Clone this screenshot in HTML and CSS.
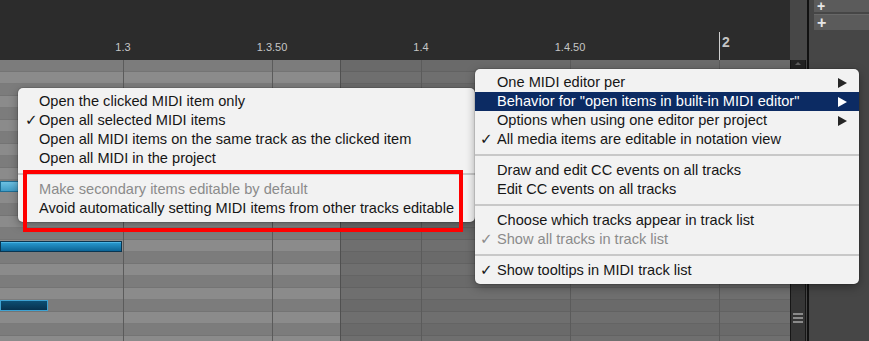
FILE: index.html
```html
<!DOCTYPE html>
<html>
<head>
<meta charset="utf-8">
<link rel="stylesheet" href="styles.css">
</head>
<body>
<div class="app">
  <div class="main">
    <div class="ruler">
      <span class="tick" style="left:123px">1.3</span>
      <span class="tick" style="left:272px">1.3.50</span>
      <span class="tick" style="left:421px">1.4</span>
      <span class="tick" style="left:570px">1.4.50</span>
      <span class="bar-line" style="left:719px"></span>
      <span class="bar-label" style="left:722px">2</span>
    </div>
    <div class="grid">
      <div class="zone zone-sel"></div>
      <div class="zone zone-rest"></div>
      <div class="vline" style="left:123px"></div>
      <div class="vline" style="left:272px"></div>
      <div class="vline vline-edge" style="left:340px"></div>
      <div class="vline" style="left:421px"></div>
      <div class="vline" style="left:570px"></div>
      <div class="vline" style="left:719px"></div>
      <div class="note note-sel" style="top:121px;width:110px"></div>
      <div class="note note-a" style="top:181px;width:122px"></div>
      <div class="note note-b" style="top:240px;width:48px"></div>
    </div>
  </div>
  <div class="scroll">
    <div class="scroll-head"></div>
    <div class="scroll-track">
      <div class="scroll-up"><span class="up-arrow"></span></div>
      <div class="scroll-fill"></div>
      <div class="grip"><i></i><i></i><i></i></div>
      <div class="scroll-foot"></div>
    </div>
  </div>
  <div class="panel">
    <div class="addbtn addbtn-first">+</div>
    <div class="addbtn">+</div>
  </div>
</div>

<div class="menu menu-left">
  <div class="item"><span class="mark"></span><span class="label">Open the clicked MIDI item only</span></div>
  <div class="item"><span class="mark">✓</span><span class="label">Open all selected MIDI items</span></div>
  <div class="item"><span class="mark"></span><span class="label">Open all MIDI items on the same track as the clicked item</span></div>
  <div class="item"><span class="mark"></span><span class="label">Open all MIDI in the project</span></div>
  <div class="sep"></div>
  <div class="item disabled"><span class="mark"></span><span class="label">Make secondary items editable by default</span></div>
  <div class="item"><span class="mark"></span><span class="label">Avoid automatically setting MIDI items from other tracks editable</span></div>
</div>

<div class="menu menu-right">
  <div class="item"><span class="mark"></span><span class="label">One MIDI editor per</span><span class="sub"></span></div>
  <div class="item hl"><span class="mark"></span><span class="label">Behavior for "open items in built-in MIDI editor"</span><span class="sub"></span></div>
  <div class="item"><span class="mark"></span><span class="label">Options when using one editor per project</span><span class="sub"></span></div>
  <div class="item"><span class="mark">✓</span><span class="label">All media items are editable in notation view</span></div>
  <div class="sep"></div>
  <div class="item"><span class="mark"></span><span class="label">Draw and edit CC events on all tracks</span></div>
  <div class="item"><span class="mark"></span><span class="label">Edit CC events on all tracks</span></div>
  <div class="sep"></div>
  <div class="item"><span class="mark"></span><span class="label">Choose which tracks appear in track list</span></div>
  <div class="item disabled"><span class="mark">✓</span><span class="label">Show all tracks in track list</span></div>
  <div class="sep"></div>
  <div class="item"><span class="mark">✓</span><span class="label">Show tooltips in MIDI track list</span></div>
</div>

<div class="callout"></div>
</body>
</html>
```

FILE: styles.css
```css
* { box-sizing: border-box; }
html, body {
  margin: 0;
  padding: 0;
  width: 869px;
  height: 341px;
  overflow: hidden;
  background: #2c2c2c;
}
body { position: relative; font-family: "Liberation Sans", Arial, sans-serif; }

.app {
  display: flex;
  width: 869px;
  height: 341px;
}

.main {
  width: 790px;
  display: flex;
  flex-direction: column;
}

.ruler {
  position: relative;
  height: 60px;
  background: #2c2c2c;
}
.tick {
  position: absolute;
  top: 40px;
  transform: translateX(-50%);
  font-size: 11px;
  line-height: 14px;
  color: #c6c6c6;
  white-space: nowrap;
}
.bar-line {
  position: absolute;
  top: 32px;
  bottom: 0;
  width: 1px;
  background: #cfcfcf;
}
.bar-label {
  position: absolute;
  top: 34px;
  font-size: 14px;
  line-height: 16px;
  font-weight: bold;
  color: #c4c4c4;
}

.grid {
  position: relative;
  flex: 1;
  display: flex;
  overflow: hidden;
}
.zone { height: 100%; }
.zone-sel {
  width: 340px;
  background:
    repeating-linear-gradient(to bottom,
      #7c7c7c 0, #7c7c7c 11px, #747474 11px, #747474 12px,
      #8b8b8b 12px, #8b8b8b 23px, #7b7b7b 23px, #7b7b7b 24px);
}
.zone-rest {
  flex: 1;
  background:
    repeating-linear-gradient(to bottom,
      #6a6a6a 0, #6a6a6a 11px, #626262 11px, #626262 12px,
      #6f6f6f 12px, #6f6f6f 23px, #646464 23px, #646464 24px);
}
.vline {
  position: absolute;
  top: 0;
  bottom: 0;
  width: 1px;
  background: #5b5b5b;
}
.vline-edge { background: #505050; }

.note {
  position: absolute;
  left: 0;
  height: 11px;
}
.note-sel {
  background: linear-gradient(#6cc0e2, #3f9cc6);
  border: 1px solid #1e6e95;
}
.note-a {
  background: linear-gradient(#2a9cd2, #0b6496);
  border: 1px solid #0b3550;
  box-shadow: inset 0 1px 0 #49b4e4;
}
.note-b {
  background: linear-gradient(#0d4e72, #07324f);
  border: 1px solid #3ea2d2;
}

.scroll {
  width: 19px;
  display: flex;
  flex-direction: column;
  background: #474747;
  border-right: 2px solid #111;
}
.scroll-head { height: 60px; }
.scroll-track {
  flex: 1;
  width: 16px;
  display: flex;
  flex-direction: column;
  align-items: center;
  background: #363636;
  border-left: 1px solid #161616;
  border-right: 1px solid #161616;
}
.scroll-up {
  width: 100%;
  height: 10px;
  background: #222;
  border-bottom: 1px solid #161616;
  display: flex;
  justify-content: center;
  padding-top: 2px;
}
.up-arrow {
  width: 0;
  height: 0;
  border-left: 3px solid transparent;
  border-right: 3px solid transparent;
  border-bottom: 3px solid #5c5c5c;
}
.scroll-fill { flex: 1; }
.grip {
  width: 10px;
  display: flex;
  flex-direction: column;
  gap: 2px;
}
.grip i {
  display: block;
  height: 2px;
  background: #8a8a8a;
}
.scroll-foot { height: 18px; }

.panel {
  flex: 1;
  background: #464646;
  padding-left: 5px;
  display: flex;
  flex-direction: column;
  gap: 2px;
}
.addbtn {
  height: 16px;
  background: #5b5b5b;
  border-top: 1px solid #686868;
  color: #e6e6e6;
  font-size: 16px;
  line-height: 15px;
  font-weight: bold;
  padding-left: 3px;
}
.addbtn-first {
  height: 12px;
  font-size: 14px;
  line-height: 12px;
  border-top: none;
}

.menu {
  position: absolute;
  background: #f2f2f2;
  border-radius: 5px;
  box-shadow: 0 3px 10px rgba(0,0,0,0.35), 0 0 0 1px rgba(0,0,0,0.10);
  padding: 4px 0;
  font-size: 14.6px;
  color: #161616;
}
.menu-left { left: 18px; top: 88px; width: 457px; }
.menu-right { left: 475px; top: 69px; width: 384px; }

.item {
  display: flex;
  align-items: center;
  height: 19px;
  line-height: 19px;
  white-space: nowrap;
}
.mark {
  width: 21px;
  padding-left: 7px;
  font-family: "DejaVu Sans", sans-serif;
  font-size: 15px;
  font-weight: bold;
}
.menu-right .mark { width: 22px; padding-left: 5px; }
.label { flex: 1; }
.sub {
  width: 0;
  height: 0;
  margin-right: 12px;
  border-left: 9px solid #262626;
  border-top: 5px solid transparent;
  border-bottom: 5px solid transparent;
}
.item.hl { background: #0c2b63; color: #fff; }
.item.hl .sub { border-left-color: #fff; }
.item.disabled { color: #8b8b8b; }

.sep {
  height: 12px;
  display: flex;
  align-items: center;
}
.sep::before {
  content: "";
  flex: 1;
  height: 2px;
  background: #c8c8c8;
}

.callout {
  position: absolute;
  left: 23px;
  top: 170px;
  width: 440px;
  height: 62px;
  border: 4px solid #ff0000;
}
```
